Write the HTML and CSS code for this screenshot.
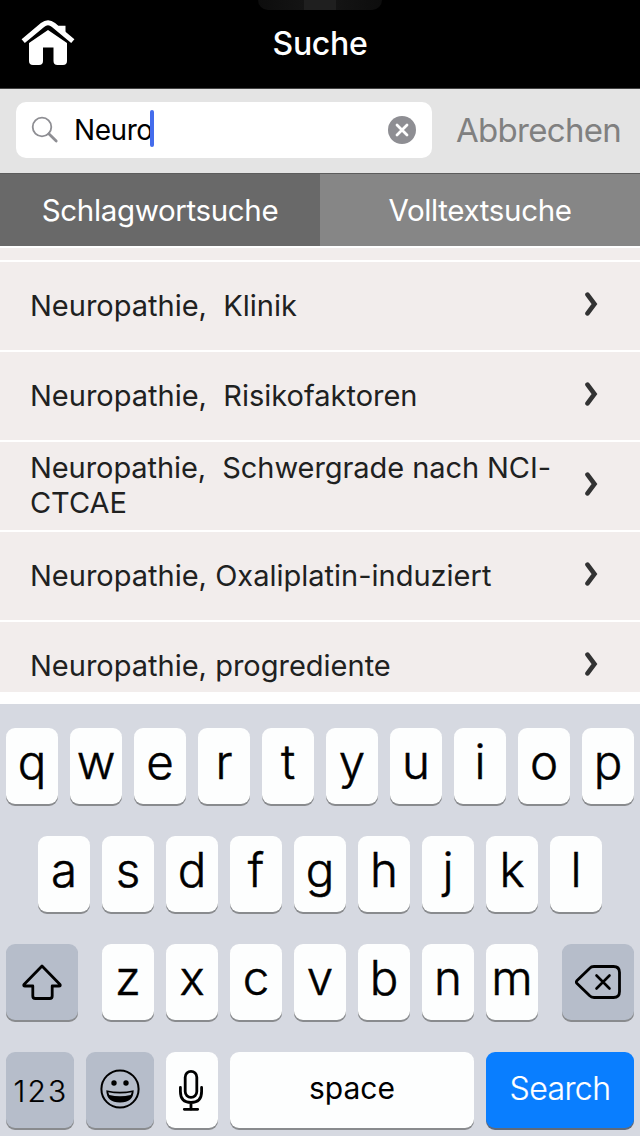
FILE: index.html
```html
<!DOCTYPE html>
<html lang="de">
<head>
<meta charset="utf-8">
<title>Suche</title>
<link rel="stylesheet" href="styles.css">
</head>
<body>
<div class="app">
  <header class="header">
    <div class="notch"></div>
    <svg class="home" viewBox="0 0 54 46" width="54" height="46">
      <path d="M2.200 21.200 L21.500 5 Q27 .500 32.500 5 L51.800 21.200" fill="none" stroke="#fff" stroke-width="5"/>
      <path d="M37.500 5.800h7v9.500l-9-7z" fill="#fff"/>
      <path d="M8 23 27 10l19 13V41q0 4-4 4h-5.500q-4 0-4-4V27.500H22V41q0 4-4 4h-6q-4 0-4-4z" fill="#fff"/>
    </svg>
    <h1 class="title">Suche</h1>
  </header>
  <div class="search">
    <div class="field">
      <svg class="lens" viewBox="0 0 28 28" width="28" height="28"><circle cx="11" cy="11" r="9.300" fill="none" stroke="#8e8e93" stroke-width="1.800"/><path d="M17.800 17.800 25.200 25" stroke="#8e8e93" stroke-width="2.800" stroke-linecap="round"/></svg>
      <span class="query">Neuro</span><span class="caret"></span>
      <svg class="clear" viewBox="0 0 28 28" width="28" height="28"><circle cx="14" cy="14" r="14" fill="#8e8e93"/><path d="M9 9l10 10M19 9 9 19" stroke="#fff" stroke-width="2.800" stroke-linecap="round"/></svg>
    </div>
    <span class="cancel">Abbrechen</span>
  </div>
  <nav class="tabs">
    <div class="tab active"><span>Schlagwortsuche</span></div>
    <div class="tab"><span>Volltextsuche</span></div>
  </nav>
  <main class="list">
    <div class="row stub"></div>
    <div class="row"><span class="label">Neuropathie,&nbsp; Klinik</span><svg class="chev" viewBox="0 0 13 24" width="13" height="24"><path d="M2.500 2.700 9.500 12 2.500 21.300" /></svg></div>
    <div class="row"><span class="label">Neuropathie,&nbsp; Risikofaktoren</span><svg class="chev" viewBox="0 0 13 24" width="13" height="24"><path d="M2.500 2.700 9.500 12 2.500 21.300" /></svg></div>
    <div class="row"><span class="label tight">Neuropathie,&nbsp; Schwergrade nach NCI-<br>CTCAE</span><svg class="chev" viewBox="0 0 13 24" width="13" height="24"><path d="M2.500 2.700 9.500 12 2.500 21.300" /></svg></div>
    <div class="row"><span class="label">Neuropathie, Oxaliplatin-induziert</span><svg class="chev" viewBox="0 0 13 24" width="13" height="24"><path d="M2.500 2.700 9.500 12 2.500 21.300" /></svg></div>
    <div class="row"><span class="label">Neuropathie, progrediente</span><svg class="chev" viewBox="0 0 13 24" width="13" height="24"><path d="M2.500 2.700 9.500 12 2.500 21.300" /></svg></div>
  </main>
  <section class="keyboard">
    <div class="keys"><div class="key">q</div><div class="key">w</div><div class="key">e</div><div class="key">r</div><div class="key">t</div><div class="key">y</div><div class="key">u</div><div class="key">i</div><div class="key">o</div><div class="key">p</div></div>
    <div class="keys"><div class="key">a</div><div class="key">s</div><div class="key">d</div><div class="key">f</div><div class="key">g</div><div class="key">h</div><div class="key">j</div><div class="key">k</div><div class="key">l</div></div>
    <div class="keys spread">
      <div class="key fn wide"><svg viewBox="0 0 40 36" width="40" height="36"><path d="M20 2 38 20.500q.8 1.500-1 1.500H30.200V32q0 2.500-2.500 2.500H13.300q-2.500 0-2.500-2.500V22H3q-1.800 0-1-1.500z" fill="none" stroke="#000" stroke-width="2.800" stroke-linejoin="round"/></svg></div>
      <div class="keys"><div class="key">z</div><div class="key">x</div><div class="key">c</div><div class="key">v</div><div class="key">b</div><div class="key">n</div><div class="key">m</div></div>
      <div class="key fn wide"><svg viewBox="0 0 46 34" width="46" height="34"><path d="M1.800 15.800 14.500 3.400Q16.300 1.500 19 1.500H38.500Q44.500 1.500 44.500 7.500V26.500Q44.500 32.500 38.500 32.500H19Q16.300 32.500 14.500 30.600L1.800 18.200Q.9 17 1.800 15.800z" fill="none" stroke="#000" stroke-width="2.800" stroke-linejoin="round"/><path d="M21.500 10.500l13 13M34.500 10.500l-13 13" stroke="#000" stroke-width="2.600" stroke-linecap="round"/></svg></div>
    </div>
    <div class="keys">
      <div class="key fn num"><span>123</span></div>
      <div class="key fn emoji"><svg viewBox="0 0 40 40" width="40" height="40"><circle cx="20" cy="20" r="18.600" fill="none" stroke="#000" stroke-width="2"/><circle cx="14" cy="14" r="2.700"/><circle cx="26" cy="14" r="2.700"/><path d="M6.300 21.200Q20 24.500 33.700 21.200 33.500 33.500 20 33.500 6.500 33.500 6.300 21.200z"/><path d="M8.200 23.200Q20 25.600 31.800 23.200L30.700 26Q20 28.600 9.300 26z" fill="#b6bdca"/></svg></div>
      <div class="key mic"><svg viewBox="0 0 26 42" width="26" height="42"><g fill="none" stroke="#000" stroke-width="2.800" stroke-linecap="round"><rect x="7.200" y="2.400" width="11.600" height="26" rx="5.800"/><path d="M2.400 18.500V22.500Q2.400 33.500 13 33.500 23.600 33.500 23.600 22.500V18.500M13 33.500v7M6.300 40.300h13.400"/></g></svg></div>
      <div class="key space"><span>space</span></div>
      <div class="key go"><span>Search</span></div>
    </div>
  </section>
</div>
</body>
</html>
```
FILE: styles.css
```css
* { box-sizing: border-box; }
body { margin: 0; font-family: Inter, "Liberation Sans", sans-serif; }
svg { display: block; flex: none; }
.app { width: 640px; height: 1136px; overflow: hidden; background: #fff; display: flex; flex-direction: column; }

.header { position: relative; flex: none; height: 89px; background: #000; border-bottom: 1px solid #424242; display: flex; justify-content: center; }
.notch { position: absolute; top: 0; left: 258px; width: 124px; height: 10px; border-radius: 0 0 12px 12px; background: linear-gradient(90deg, #0d0d0d 0, #141414 46px, #1f1f1f 46px, #1f1f1f 78px, #141414 78px, #0d0d0d 100%); }
.home { position: absolute; left: 21px; top: 20px; }
.title { margin: 0; font-size: 32px; font-weight: 550; letter-spacing: -0.3px; line-height: 88px; color: #fff; }

.search { flex: none; height: 84px; background: #e4e4e4; display: flex; align-items: center; padding: 0 0 2px 16px; }
.field { flex: none; width: 416px; height: 56px; border-radius: 10px; background: #fff; display: flex; align-items: center; padding: 0 16px 0 15px; }
.query { margin-left: 15px; font-size: 28px; letter-spacing: -0.45px; color: #000; }
.caret { width: 4px; height: 37px; border-radius: 2px; background: #446cec; margin-left: -2.5px; margin-top: -3px; }
.clear { margin-left: auto; }
.cancel { margin-left: 24px; font-size: 33px; font-weight: 400; letter-spacing: -0.7px; color: #808080; white-space: nowrap; }

.tabs { flex: none; height: 73px; border-top: 1px solid #5c5c5c; display: flex; }
.tab { flex: 1; background: #868686; color: #fff; font-size: 29.5px; font-weight: 400; letter-spacing: -0.35px; display: flex; align-items: center; justify-content: center; padding-bottom: 1px; }
.tab.active { background: #696969; }

.list { flex: none; height: 446px; overflow: hidden; padding-top: 2px; }
.row { height: 88px; margin-bottom: 2px; background: #f2edec; display: flex; align-items: center; justify-content: space-between; padding: 0 42px 0 30px; }
.row.stub { height: 12px; }
.label { margin-bottom: 2px; font-size: 29px; line-height: 35px; color: #20211f; white-space: nowrap; }
.label.tight { letter-spacing: -0.07px; }
.chev { margin-bottom: 4px; fill: none; stroke: #333; stroke-width: 4.6; stroke-linecap: round; stroke-linejoin: miter; }

.keyboard { flex: none; margin-top: 12px; height: 432px; background: #d6d9e1; padding: 24px 6px 0; display: flex; flex-direction: column; gap: 32px; }
.keys { display: flex; justify-content: center; gap: 12px; }
.keys.spread { justify-content: space-between; }
.key { width: 52px; height: 76px; border-radius: 9px; background: #fdfefe; box-shadow: 0 2px 0 #898b8e; display: flex; align-items: center; justify-content: center; padding-bottom: 8px; font-size: 47.5px; font-weight: 300; -webkit-text-stroke: 0.5px currentColor; line-height: 60px; color: #000; }
.key.fn { background: #b6bdca; padding-bottom: 0; }
.key.wide { width: 72px; }
.key.num { width: 68px; font-size: 30px; letter-spacing: 2.2px; padding: 2px 0 0 2px; -webkit-text-stroke-width: 0.2px; }
.key.emoji { width: 68px; padding-bottom: 2px; }
.key.mic { padding: 0 2px 0 0; }
.key.space { width: 244px; font-size: 30px; font-weight: 400; padding: 0 0 4px 0; -webkit-text-stroke-width: 0; }
.key.go { width: 148px; background: #097eff; color: #fff; font-size: 32px; letter-spacing: -0.6px; padding-bottom: 3px; box-shadow: 0 2px 0 #5f6b7c; -webkit-text-stroke-width: 0.2px; }
```
